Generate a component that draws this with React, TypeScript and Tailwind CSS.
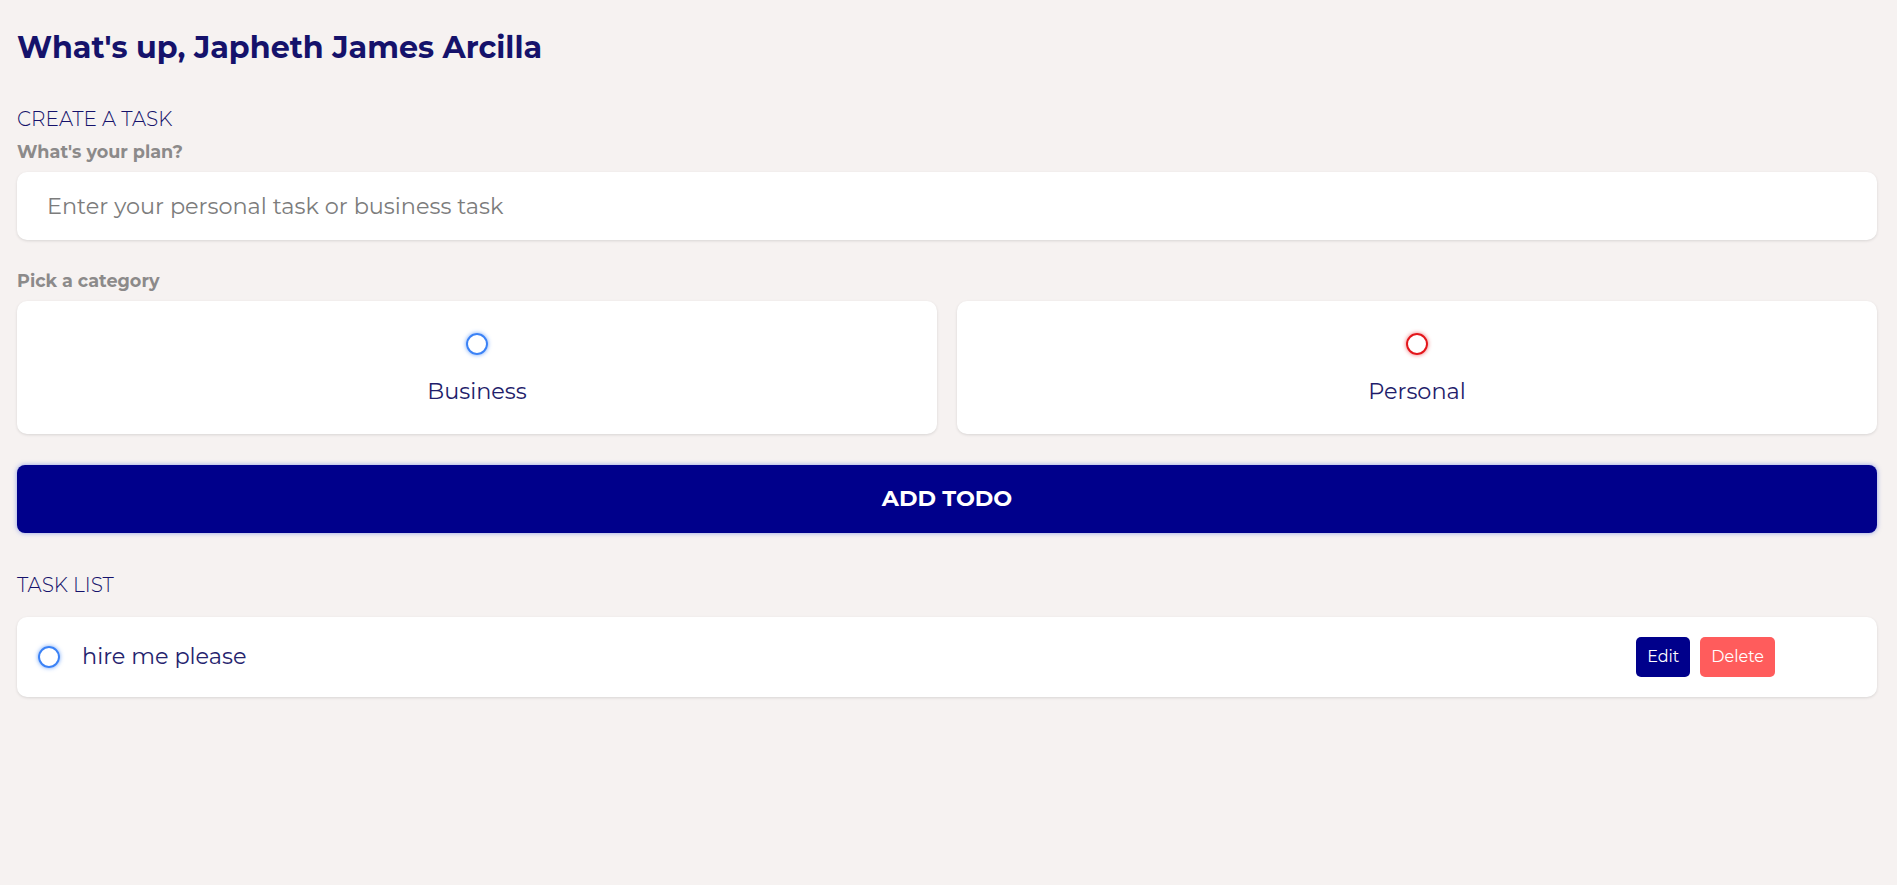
import { useState } from 'react';

type Todo = {
  id: number;
  content: string;
  category: 'business' | 'personal';
  done: boolean;
};

const font = { fontFamily: "Montserrat, 'DejaVu Sans', sans-serif" };

export default function App() {
  const [input, setInput] = useState('');
  const [category, setCategory] = useState<string>('');
  const [todos] = useState<Todo[]>([
    { id: 1, content: 'hire me please', category: 'business', done: false }
  ]);

  return (
    <div className="min-h-screen bg-[#f6f2f1] pl-[17px] pr-[20px] pt-[28px]" style={font}>
      <h1 className="text-[30.2px] leading-[40px] font-bold text-[#15126b]">What's up, Japheth James Arcilla</h1>

      {/* Create */}
      <h3 className="mt-[39px] text-[20px] leading-[24px] font-light text-[#15126b]">CREATE A TASK</h3>
      <h4 className="mt-[11px] text-[17.6px] leading-[20px] font-bold text-[#8c8a8a]">What's your plan?</h4>
      <input
        type="text"
        value={input}
        onChange={(e) => setInput(e.target.value)}
        placeholder="Enter your personal task or business task"
        className="mt-[10px] block w-full h-[68px] px-[30px] text-[22.4px] bg-white rounded-[10px] shadow-[0_1px_3px_rgba(0,0,0,0.12)] outline-none placeholder:text-[#7c7c7c]"
      />

      <h4 className="mt-[31px] text-[17.6px] leading-[20px] font-bold text-[#8c8a8a]">Pick a category</h4>
      <div className="mt-[10px] grid grid-cols-2 gap-[20px]">
        <label className="h-[133px] bg-white rounded-[10px] shadow-[0_1px_3px_rgba(0,0,0,0.12)] flex flex-col items-center pt-[32px] cursor-pointer">
          <input
            type="radio"
            name="category"
            checked={category === 'business'}
            onChange={() => setCategory('business')}
            className="appearance-none w-[22px] h-[22px] rounded-full border-2 border-[#3b82f6] shadow-[0_0_4px_rgba(59,130,246,0.7)]"
          />
          <span className="mt-[22px] text-[22.4px] leading-[28px] text-[#1f1d6b]">Business</span>
        </label>
        <label className="h-[133px] bg-white rounded-[10px] shadow-[0_1px_3px_rgba(0,0,0,0.12)] flex flex-col items-center pt-[32px] cursor-pointer">
          <input
            type="radio"
            name="category"
            checked={category === 'personal'}
            onChange={() => setCategory('personal')}
            className="appearance-none w-[22px] h-[22px] rounded-full border-2 border-[#e3161b] shadow-[0_0_4px_rgba(227,22,27,0.6)]"
          />
          <span className="mt-[22px] text-[22.4px] leading-[28px] text-[#1f1d6b]">Personal</span>
        </label>
      </div>

      <button
        type="button"
        className="mt-[31px] block w-full h-[68px] rounded-[8px] bg-[#00008b] text-white text-[22.4px] font-bold shadow-[0_0_5px_rgba(59,90,220,0.55)]"
      >
        ADD TODO
      </button>

      {/* List */}
      <h3 className="mt-[40px] text-[20px] leading-[24px] font-light text-[#15126b]">TASK LIST</h3>
      <div className="mt-[20px] flex flex-col gap-[20px]">
        {todos.map((todo) => (
          <div
            key={todo.id}
            className="h-[80px] bg-white rounded-[10px] shadow-[0_1px_3px_rgba(0,0,0,0.12)] flex items-center pl-[21px] pr-[102px]"
          >
            <input
              type="checkbox"
              checked={todo.done}
              readOnly
              className="appearance-none w-[22px] h-[22px] rounded-full border-2 border-[#3b82f6] shadow-[0_0_4px_rgba(59,130,246,0.7)]"
            />
            <span className="ml-[22px] text-[22.4px] text-[#25236e]">{todo.content}</span>
            <div className="ml-auto flex items-center gap-[10px]">
              <button type="button" className="h-[40px] px-[11px] rounded-[5px] bg-[#00008b] text-white text-[16px]">
                Edit
              </button>
              <button type="button" className="h-[40px] px-[11px] rounded-[5px] bg-[#ff5c5c] text-white text-[16px]">
                Delete
              </button>
            </div>
          </div>
        ))}
      </div>
    </div>
  );
}
